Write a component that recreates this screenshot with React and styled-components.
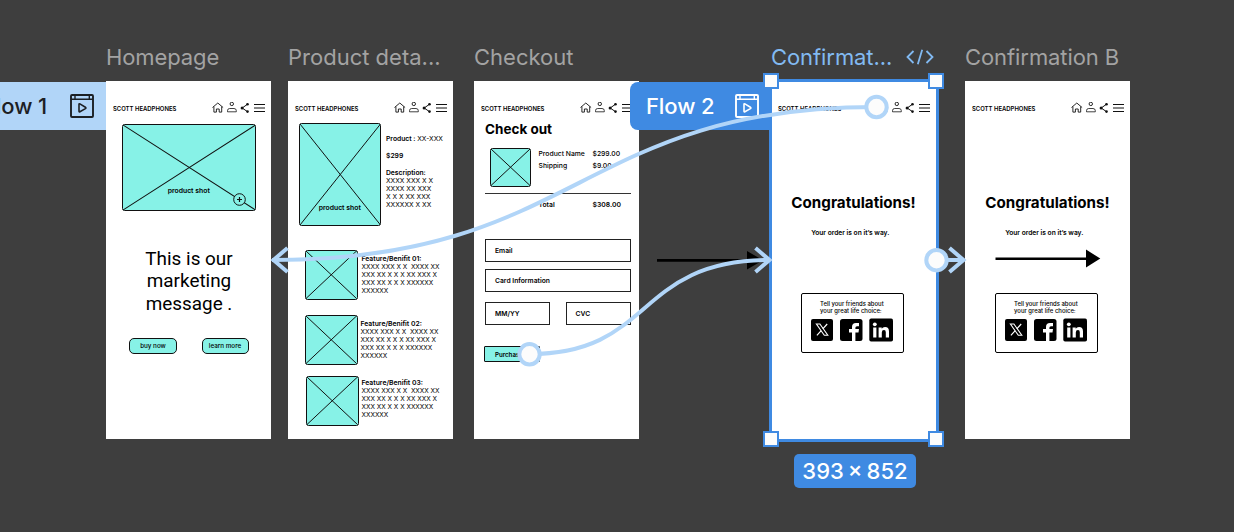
import React from "react";
import styled, { createGlobalStyle, css } from "styled-components";

const BLUE = "#3f8ae2";
const LIGHT = "#b1d5f8";
const TEAL = "#87f2e7";
const INK = "#111";

const Global = createGlobalStyle`
  * { box-sizing: border-box; }
  body { margin: 0; background: #3e3e3e; font-family: Inter, "Liberation Sans", sans-serif; }
`;

const Canvas = styled.main`
  position: relative;
  width: 1234px;
  height: 532px;
  overflow: hidden;
  background: #3e3e3e;
`;

/* Artboards and their labels sit freely on the canvas */
const Board = styled.section`
  position: absolute;
  left: ${(p) => p.$x}px;
  top: 81px;
  width: 165px;
  height: 358px;
  background: #fff;
  color: #000;
  overflow: hidden;
`;

const BoardTitle = styled.h2`
  position: absolute;
  left: ${(p) => p.$x}px;
  top: 43px;
  margin: 0;
  display: flex;
  align-items: center;
  gap: 14px;
  font-size: 22px;
  font-weight: 400;
  line-height: 29px;
  letter-spacing: ${(p) => p.$ls ?? 0}px;
  color: ${(p) => (p.$active ? "#82baf2" : "#a3a3a3")};
  white-space: pre;
`;

const Header = styled.header`
  height: 42px;
  padding: 21px 6px 9px 7px;
  display: flex;
  justify-content: space-between;
`;

const Brand = styled.span`
  margin-top: 1px;
  font-size: 5.95px;
  font-weight: 600;
  line-height: 12px;
  white-space: nowrap;
`;

const NavIcons = styled.svg`
  width: 54px;
  height: 12px;
  fill: none;
  stroke: #111;
`;

const ShotBox = styled.figure`
  position: relative;
  margin: ${(p) => p.$margin ?? "0"};
  width: ${(p) => p.$w}px;
  height: ${(p) => p.$h}px;
  flex: none;
  border: 1.2px solid ${INK};
  border-radius: 2.5px;
  background: ${TEAL};
`;

const Cross = styled.svg`
  display: block;
  width: 100%;
  height: 100%;
  stroke: ${INK};
`;

const ShotLabel = styled.figcaption`
  position: absolute;
  left: 0;
  right: 0;
  bottom: ${(p) => p.$bottom}px;
  text-align: center;
  font-size: 6.85px;
  font-weight: 600;
  line-height: 10px;
`;

const PlusBadge = styled.svg`
  position: absolute;
  right: 9px;
  bottom: 4px;
  width: 13px;
  height: 13px;
  fill: none;
  stroke: ${INK};
`;

const Marketing = styled.p`
  margin: 37px 0 0;
  padding-left: 1px;
  font-family: Roboto, sans-serif;
  font-size: 18.9px;
  line-height: 22.3px;
  text-align: center;
`;

const ButtonRow = styled.div`
  display: flex;
  gap: 24.5px;
  padding: 23px 0 0 23px;
`;

const Pill = styled.button`
  width: ${(p) => p.$w}px;
  height: 16px;
  padding: 0;
  border: 1px solid ${INK};
  border-radius: 5px;
  background: ${TEAL};
  color: #000;
  font: 500 6.3px/14px Inter, sans-serif;
`;

const ProductTop = styled.div`
  display: flex;
  gap: 5px;
  padding-left: 10.5px;
`;

const Copy = styled.div`
  font-size: 6.55px;
  line-height: 8px;
  white-space: pre;
  b { font-weight: 600; }
`;

const ProductInfo = styled(Copy)`
  padding-top: 11.5px;
  font-size: 6.75px;
  p { margin: 0 0 9px; }
`;

const Feature = styled.div`
  display: flex;
  align-items: flex-start;
  gap: ${(p) => p.$gap}px;
  height: 49.5px;
  margin: ${(p) => p.$margin};
`;

const FeatureCopy = styled(Copy)`
  padding-top: ${(p) => p.$top}px;
  b { font-size: 6.8px; }
`;

const CheckoutTitle = styled.h3`
  margin: -1px 0 0 11px;
  font-size: 13.5px;
  font-weight: 700;
  line-height: 14px;
`;

const OrderRow = styled.div`
  display: grid;
  grid-template-columns: 48.5px 54px 50px;
  padding-left: 16px;
  margin-top: ${(p) => p.$top}px;
  align-items: start;
`;

const OrderCell = styled.span`
  font-size: 6.8px;
  line-height: 11.5px;
  font-weight: ${(p) => (p.$bold ? 600 : 500)};
  white-space: pre;
`;

const Rule = styled.hr`
  width: 146px;
  height: 1px;
  margin: 6.5px 0 0 11px;
  border: 0;
  background: #333;
`;

const Form = styled.form`
  display: grid;
  grid-template-columns: 65px 65px;
  column-gap: 15.5px;
  margin: 29px 0 0 11px;
`;

const Field = styled.div`
  height: 23px;
  padding-left: 9px;
  border: 1.2px solid #222;
  margin-bottom: ${(p) => p.$gap ?? 0}px;
  font-size: 6.75px;
  font-weight: 600;
  line-height: 22.5px;
  ${(p) => p.$wide && css`grid-column: 1 / 3;`}
`;

const Purchase = styled.button`
  width: 56px;
  height: 16px;
  margin: 21px 0 0 10.4px;
  padding: 0 0 0 9.5px;
  border: 1.2px solid ${INK};
  border-radius: 1px;
  background: ${TEAL};
  color: #000;
  text-align: left;
  font: 600 6.2px/13px Inter, sans-serif;
`;

const Congrats = styled.h3`
  margin: 71px 0 0;
  font-size: 15.2px;
  font-weight: 700;
  line-height: 18px;
  text-align: center;
`;

const OrderNote = styled.p`
  margin: 16px 0 0;
  padding-right: 6.5px;
  font-size: 6.65px;
  font-weight: 600;
  line-height: 11px;
  text-align: center;
`;

const ArrowSlot = styled.svg`
  display: block;
  width: 165px;
  height: 54px;
`;

const ShareCard = styled.div`
  width: 103px;
  height: 60px;
  margin-left: 30px;
  padding: 5.5px 0 0 9px;
  border: 1.5px solid #000;
  border-radius: 2px;
`;

const ShareText = styled.p`
  margin: 0 0 4px;
  padding-left: 9px;
  font-size: 5.95px;
  font-weight: 500;
  line-height: 7.3px;
  white-space: nowrap;
`;

const ShareIcons = styled.svg`
  display: block;
  width: 83px;
  height: 25px;
`;

const FlowTag = styled.div`
  position: absolute;
  left: ${(p) => p.$x}px;
  top: 82px;
  width: 141px;
  height: 48px;
  padding: 0 12px 0 ${(p) => (p.$active ? 16 : 18)}px;
  display: flex;
  align-items: center;
  justify-content: space-between;
  border-radius: 8px 0 0 8px;
  background: ${(p) => (p.$active ? BLUE : LIGHT)};
  color: ${(p) => (p.$active ? "#fff" : "#1c2024")};
  font-size: 22px;
  font-weight: 500;
  letter-spacing: -0.1px;
  svg { width: 24px; height: 24px; fill: none; stroke: currentColor; }
`;

const Selection = styled.div`
  position: absolute;
  left: 769px;
  top: 79px;
  width: 170px;
  height: 363px;
  border: 3px solid ${BLUE};
`;

const Handle = styled.i`
  position: absolute;
  ${(p) => p.$v}: ${(p) => (p.$v === "top" ? -9 : -8)}px;
  ${(p) => p.$h}: ${(p) => (p.$h === "left" ? -9 : -8)}px;
  width: 16px;
  height: 16px;
  border: 2px solid ${BLUE};
  background: #fcfcfc;
`;

const SizeTag = styled.div`
  position: absolute;
  left: 794px;
  top: 454px;
  width: 122px;
  height: 34px;
  border-radius: 5px;
  background: ${BLUE};
  color: #fff;
  font-size: 22px;
  font-weight: 500;
  word-spacing: -1.8px;
  line-height: 34px;
  text-align: center;
  white-space: nowrap;
`;

const Wires = styled.svg`
  position: absolute;
  inset: 0;
  width: 1234px;
  height: 532px;
  pointer-events: none;
`;

function BoardHeader() {
  return (
    <Header>
      <Brand>SCOTT HEADPHONES</Brand>
      <NavIcons viewBox="0 0 54 12">
        <path d="M1.5 5.5 L6.8 1 L12.1 5.5 M2.9 4.6 V10.1 H5.4 V7 H8.2 V10.1 H10.7 V4.6" strokeWidth="0.9" />
        <circle cx="20.8" cy="1.9" r="1.7" strokeWidth="0.9" />
        <path d="M16.5 9.8 V8.7 Q16.5 6.5 18.7 6.5 H23 Q25.3 6.5 25.3 8.7 V9.8 Z" strokeWidth="0.8" />
        <path d="M36.4 2.3 L31.2 6 L36.4 9.6" strokeWidth="1" />
        <g fill="#111" stroke="none">
          <circle cx="36.5" cy="2.3" r="1.3" />
          <circle cx="31.1" cy="6" r="1.5" />
          <circle cx="36.5" cy="9.6" r="1.3" />
        </g>
        <path d="M43 2.5 H54 M43 6 H54 M43 9.5 H54" strokeWidth="1" />
      </NavIcons>
    </Header>
  );
}

function Shot({ w, h, margin, children }) {
  return (
    <ShotBox $w={w} $h={h} $margin={margin}>
      <Cross viewBox="0 0 100 100" preserveAspectRatio="none">
        <path d="M0 0 L100 100 M100 0 L0 100" vectorEffect="non-scaling-stroke" strokeWidth="1" />
      </Cross>
      {children}
    </ShotBox>
  );
}

function FeatureItem({ n, gap, margin, top }) {
  return (
    <Feature $gap={gap} $margin={margin}>
      <Shot w={52.5} h={49.5} />
      <FeatureCopy $top={top}>
        <b>Feature/Benifit {n}:</b>
        {"\nXXXX XXX X X  XXXX XX\nXXX XX X X X XX XXX X\nXXX XX X X X XXXXXX\nXXXXXX"}
      </FeatureCopy>
    </Feature>
  );
}

function Confirmation({ x, arrow }) {
  return (
    <Board $x={x}>
      <BoardHeader />
      <Congrats>Congratulations!</Congrats>
      <OrderNote>Your order is on it’s way.</OrderNote>
      <ArrowSlot viewBox="0 0 165 54">
        {arrow && <path d="M30.5 18.4 H121 V10.5 L135.3 19.6 L121 28.6 V21 H30.5 Z" />}
      </ArrowSlot>
      <ShareCard>
        <ShareText>
          Tell your friends about
          <br />
          your great life choice:
        </ShareText>
        <ShareIcons viewBox="0 0 83 25">
          <rect x="0" y="1" width="22" height="22" rx="2" />
          <path d="M5.4 6 H8.9 L16.8 17.3 H13.3 Z" fill="none" stroke="#fff" strokeWidth="1.1" />
          <path d="M16.2 6 L11.8 10.9 M10.2 12.6 L5.9 17.3" stroke="#fff" strokeWidth="1.2" />
          <rect x="29" y="1" width="22.5" height="22" rx="2.5" />
          <path d="M41 23 V14.4 H38 V11 H41 V9 Q41 5 45 5 H48 V8.3 H46 Q44.4 8.3 44.4 9.8 V11 H48 L47.5 14.4 H44.4 V23 Z" fill="#fff" />
          <rect x="58.3" y="0.6" width="23.7" height="23" rx="1.8" />
          <g fill="#fff">
            <circle cx="63.8" cy="6.3" r="1.9" />
            <path d="M62.2 9.4 H65.4 V19.4 H62.2 Z M67.6 9.4 H70.7 V10.8 Q71.7 9.1 74 9.1 Q78 9.1 78 13.4 V19.4 H74.8 V14.2 Q74.8 12 73 12 Q70.8 12 70.8 14.4 V19.4 H67.6 Z" />
          </g>
        </ShareIcons>
      </ShareCard>
    </Board>
  );
}

function Flow({ x, active, children }) {
  return (
    <FlowTag $x={x} $active={active}>
      <span>{children}</span>
      <svg viewBox="0 0 24 24">
        <rect x="1" y="1" width="22" height="22" rx="1" strokeWidth="1.9" />
        <path d="M1 5.3 H23 M5 1 V5 M19.3 1 V5" strokeWidth="1.4" />
        <path d="M9 10.3 Q9 9.4 9.9 9.9 L15.4 13.2 Q16.4 13.9 15.4 14.6 L9.9 17.8 Q9 18.2 9 17.3 Z" strokeWidth="1.6" />
      </svg>
    </FlowTag>
  );
}

export default function App() {
  return (
    <Canvas>
      <Global />
      <BoardTitle $x={106} $ls={-0.1}>Homepage</BoardTitle>
      <BoardTitle $x={288}>Product deta...</BoardTitle>
      <BoardTitle $x={474}>Checkout</BoardTitle>
      <BoardTitle $x={771} $ls={-0.08} $active>
        Confirmat...
        <svg width="28" height="18" viewBox="0 0 28 18" fill="none" stroke="currentColor" strokeWidth="1.8">
          <path d="M7.5 2 L1.5 8 L7.5 14 M20.5 2 L26.5 8 L20.5 14 M16.2 0.8 L11.8 15.2" />
        </svg>
      </BoardTitle>
      <BoardTitle $x={965} $ls={-0.08}>Confirmation B</BoardTitle>

      <Board $x={106}>
        <BoardHeader />
        <Shot w={134.5} h={87} margin="1px 0 0 15.5px">
          <ShotLabel $bottom={14}>product shot</ShotLabel>
          <PlusBadge viewBox="0 0 13 13">
            <circle cx="6.5" cy="6.5" r="5.8" strokeWidth="1" fill={TEAL} />
            <path d="M6.5 4 V9 M4 6.5 H9" strokeWidth="1.2" />
          </PlusBadge>
        </Shot>
        <Marketing>
          This is our
          <br />
          marketing
          <br />
          message .
        </Marketing>
        <ButtonRow>
          <Pill $w={48}>buy now</Pill>
          <Pill $w={47}>learn more</Pill>
        </ButtonRow>
      </Board>

      <Board $x={288}>
        <BoardHeader />
        <ProductTop>
          <Shot w={82.5} h={103}>
            <ShotLabel $bottom={12.5}>product shot</ShotLabel>
          </Shot>
          <ProductInfo>
            <p><b>Product : </b>XX-XXX</p>
            <p><b>$299</b></p>
            <b>Description:</b>
            {"\nXXXX XXX X X\nXXXX XX XXX\nX X X XX XXX\nXXXXXX X XX"}
          </ProductInfo>
        </ProductTop>
        <FeatureItem n="01" gap={4} margin="24px 0 0 17px" top={4.5} />
        <FeatureItem n="02" gap={3} margin="15.5px 0 0 17px" top={4.5} />
        <FeatureItem n="03" gap={3} margin="11.5px 0 0 18px" top={3} />
      </Board>

      <Board $x={474}>
        <BoardHeader />
        <CheckoutTitle>Check out</CheckoutTitle>
        <OrderRow $top={12}>
          <Shot w={41} h={38.5} />
          <OrderCell>{"Product Name\nShipping"}</OrderCell>
          <OrderCell>{"$299.00\n$9.00"}</OrderCell>
        </OrderRow>
        <Rule />
        <OrderRow $top={4.5}>
          <span />
          <OrderCell $bold>Total</OrderCell>
          <OrderCell $bold>$308.00</OrderCell>
        </OrderRow>
        <Form>
          <Field $wide $gap={7}>Email</Field>
          <Field $wide $gap={10}>Card Information</Field>
          <Field>MM/YY</Field>
          <Field>CVC</Field>
        </Form>
        <Purchase type="button">Purchase</Purchase>
      </Board>

      <Confirmation x={771} />
      <Confirmation x={965} arrow />

      <Wires viewBox="0 0 1234 532">
        <path d="M657 259 H747 V251 L763 260.3 L747 269.5 V261.7 H657 Z" fill="#000" />
      </Wires>

      <Flow x={-35}>Flow 1</Flow>
      <Flow x={630} active>Flow 2</Flow>

      <Selection>
        <Handle $v="top" $h="left" />
        <Handle $v="top" $h="right" />
        <Handle $v="bottom" $h="left" />
        <Handle $v="bottom" $h="right" />
      </Selection>
      <SizeTag>393 × 852</SizeTag>

      <Wires viewBox="0 0 1234 532" fill="none" stroke={LIGHT} strokeWidth="4">
        <path d="M876.5 107 C579 107 579 260 272 260" />
        <path d="M529.5 354 C655 354 634 260 770 260" />
        <path d="M936.5 260 H963" />
        <path d="M287.5 248 L273.5 260 L287.5 272" />
        <path d="M755.5 248 L769.5 260 L755.5 272" />
        <path d="M949.5 248 L963.5 260 L949.5 272" />
        <g fill="#fcfcfc">
          <circle cx="876.5" cy="107" r="10.2" />
          <circle cx="529.5" cy="354.3" r="10.2" />
          <circle cx="936.5" cy="260.2" r="10.2" />
        </g>
      </Wires>
    </Canvas>
  );
}
